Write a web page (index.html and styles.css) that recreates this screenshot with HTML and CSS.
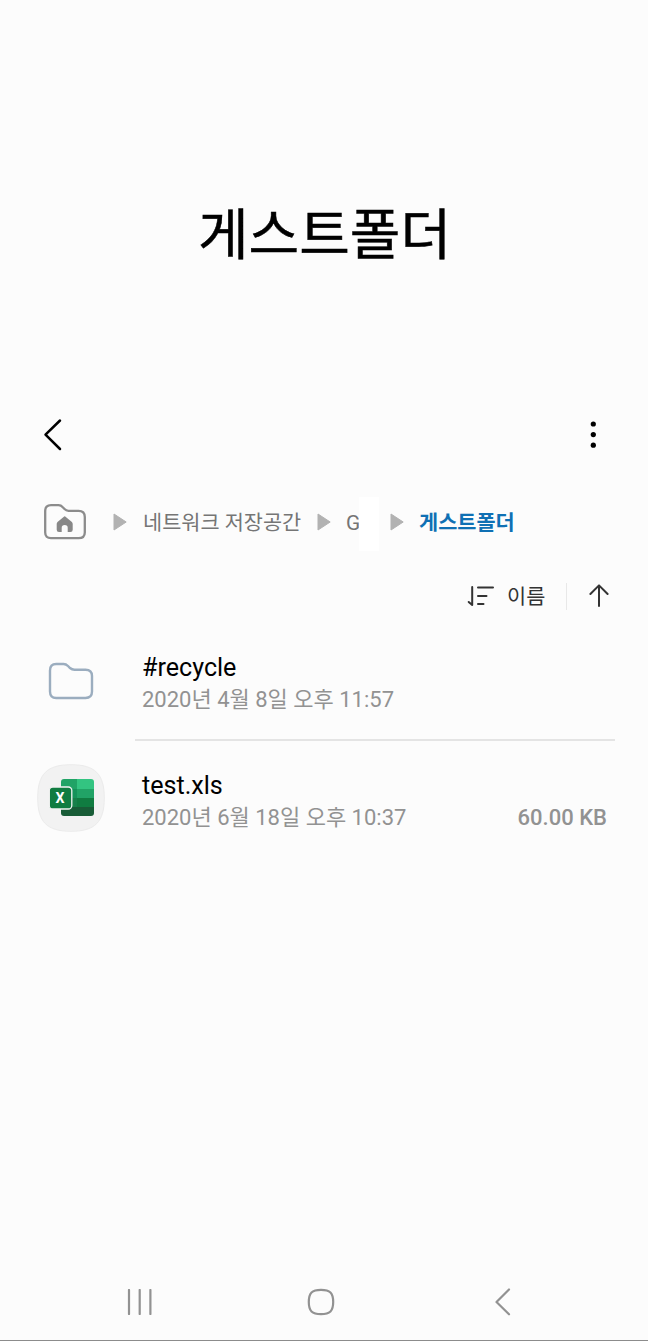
FILE: index.html
```html
<!DOCTYPE html>
<html lang="ko">
<head>
<meta charset="utf-8">
<title>게스트폴더</title>
<link rel="stylesheet" href="styles.css">
</head>
<body>
<div class="screen">
  <header class="hero"><h1 class="title">게스트폴더</h1></header>

  <div class="toolbar">
    <svg class="back" width="24" height="36" viewBox="0 0 24 36"><path d="M20 3.5 5.5 17.7 20 32" fill="none" stroke="#000" stroke-width="2.5" stroke-linecap="round" stroke-linejoin="round"/></svg>
    <svg class="more" width="8" height="30" viewBox="0 0 8 30"><g fill="#000"><circle cx="4.3" cy="4" r="2.6"/><circle cx="4.3" cy="14.6" r="2.6"/><circle cx="4.3" cy="25.2" r="2.6"/></g></svg>
  </div>

  <nav class="crumbs">
    <svg class="home" width="44" height="38" viewBox="0 0 44 38"><path d="M8 2.2H15.5Q18 2.2 19.8 4.2L21.5 6Q23.2 7.8 25.5 7.8H35.5Q41.8 7.8 41.8 14V29.5Q41.8 35.2 35.5 35.2H8Q2.2 35.2 2.2 29.5V8Q2.2 2.2 8 2.2Z" fill="none" stroke="#8c8c8c" stroke-width="2.3"/><path d="M21.2 13.4Q21.7 13 22.2 13.4L28.9 19Q29.7 19.8 29.7 21V26.7Q29.7 29 27.4 29H24.7V24.8Q24.7 22 21.7 22T18.7 24.8V29H16Q13.7 29 13.7 26.7V21Q13.7 19.8 14.5 19Z" fill="#888"/></svg>
    <svg class="arrow a1" width="14" height="18" viewBox="0 0 14 18"><path d="M1 1 13.2 9 1 17Z" fill="#b2b2b2" stroke="#b2b2b2" stroke-linejoin="round"/></svg>
    <span class="crumb c1">네트워크 저장공간</span>
    <svg class="arrow a2" width="14" height="18" viewBox="0 0 14 18"><path d="M1 1 13.2 9 1 17Z" fill="#b2b2b2" stroke="#b2b2b2" stroke-linejoin="round"/></svg>
    <span class="crumb c2">G</span>
    <span class="mask"></span>
    <svg class="arrow a3" width="14" height="18" viewBox="0 0 14 18"><path d="M1 1 13.2 9 1 17Z" fill="#b2b2b2" stroke="#b2b2b2" stroke-linejoin="round"/></svg>
    <span class="crumb current">게스트폴더</span>
  </nav>

  <div class="sort">
    <svg class="sort-icon" width="28" height="24" viewBox="0 0 28 24" fill="none" stroke="#333" stroke-width="2" stroke-linecap="round" stroke-linejoin="round"><path d="M5.2 3V21L1.7 18M11 3.5H26M11 12H19.5M11 20H16.5"/></svg>
    <span class="sort-label">이름</span>
    <span class="sort-rule"></span>
    <svg class="up" width="20" height="24" viewBox="0 0 20 24" fill="none" stroke="#333" stroke-width="2" stroke-linecap="round" stroke-linejoin="round"><path d="M10 22V1.6M1.4 10 10 1.4 18.6 10"/></svg>
  </div>

  <main class="files">
    <div class="row">
      <div class="thumb"><svg width="46" height="38" viewBox="0 0 46 38"><path d="M8.2 2H15.5Q18 2 20 4L22 6Q24 7.7 26.5 7.7H37.5Q44 7.7 44 14V29.6Q44 36 37.5 36H8.2Q2 36 2 29.6V8.5Q2 2 8.2 2Z" fill="none" stroke="#9badbf" stroke-width="2.4"/></svg></div>
      <div class="info ruled">
        <div class="name">#recycle</div>
        <div class="meta"><span class="date">2020년 4월 8일 오후 11:57</span></div>
      </div>
    </div>
    <div class="row">
      <div class="thumb app"><svg width="68" height="68" viewBox="0 0 68 68">
        <path d="M34 .7C58 .7 67.3 10 67.3 34S58 67.3 34 67.3.7 58 .7 34 10 .7 34 .7Z" fill="#f2f2f2" stroke="#ebebeb"/>
        <clipPath id="book"><rect x="24" y="15" width="33" height="37" rx="3"/></clipPath>
        <g clip-path="url(#book)"><path fill="#21a366" d="M24 15h16v10H24z"/><path fill="#33c481" d="M40 15h17v10H40z"/><path fill="#15935a" d="M24 25h16v9H24z"/><path fill="#21a366" d="M40 25h17v9H40z"/><path fill="#17804a" d="M24 34h16v9H24z"/><path fill="#107c41" d="M40 34h17v9H40z"/><path fill="#185c37" d="M24 43h33v9H24z"/></g>
        <rect x="12.3" y="23" width="22.5" height="22" rx="3.5" fill="#107c41" stroke="#f2f2f2" stroke-width="1.3"/>
        <text x="18.4" y="39.2" textLength="9" lengthAdjust="spacingAndGlyphs" class="badge-letter">X</text>
      </svg></div>
      <div class="info">
        <div class="name">test.xls</div>
        <div class="meta"><span class="date">2020년 6월 18일 오후 10:37</span><span class="size">60.00 KB</span></div>
      </div>
    </div>
  </main>

  <footer class="navbar">
    <svg class="recents" width="26" height="26" viewBox="0 0 26 26"><path d="M2 1V25M12.7 1V25M23.4 1V25" stroke="#929292" stroke-width="2.2" stroke-linecap="round"/></svg>
    <svg class="homekey" width="28" height="28" viewBox="0 0 28 28"><path d="M14 1.8C23 1.8 26.2 5 26.2 14S23 26.2 14 26.2 1.8 23 1.8 14 5 1.8 14 1.8Z" fill="none" stroke="#929292" stroke-width="2.2"/></svg>
    <svg class="backkey" width="18" height="28" viewBox="0 0 18 28"><path d="M15 1.5 2.5 14 15 26.3" fill="none" stroke="#929292" stroke-width="2.2" stroke-linecap="round" stroke-linejoin="round"/></svg>
  </footer>
</div>
</body>
</html>
```
FILE: styles.css
```css
* { box-sizing: border-box; }
body { margin: 0; background: #fcfcfc; font-family: Roboto, "Noto Sans CJK KR", sans-serif; color: #000; }
svg { display: block; flex: none; }
.screen { height: 1341px; display: flex; flex-direction: column; white-space: nowrap; overflow: hidden; }
.hero { height: 390px; padding: 195px 0 0 1px; text-align: center; }
.title { margin: 0; font-size: 55px; line-height: 80px; font-weight: 400; -webkit-text-stroke: 0.5px #000; }
.toolbar { height: 90px; display: flex; align-items: center; justify-content: space-between; padding: 0 51px 0 40px; }
.crumbs { height: 84px; display: flex; align-items: center; padding-left: 43px; color: #757575; font-size: 20.8px; line-height: 30px; }
.crumb { padding-top: 2px; }
.a1 { margin-left: 26px; }
.c1 { margin-left: 16px; width: 158px; }
.a2 { margin-left: 16px; }
.c2 { margin-left: 15px; width: 13px; }
.mask { width: 20px; height: 54px; background: #fff; margin-top: 4px; }
.a3 { margin-left: 11px; }
.current { margin-left: 15px; color: #0f70b4; font-weight: 700; }
.sort { height: 64px; display: flex; align-items: center; padding-left: 467px; color: #333; font-size: 20.8px; line-height: 30px; }
.sort-label { margin-left: 12px; width: 39px; padding-top: 2px; }
.sort-rule { margin-left: 20px; width: 1px; height: 27px; background: #e8e8e8; }
.up { margin-left: 22px; }
.files { flex: 1; padding-top: 1px; margin-top: -6px; }
.row { height: 118px; display: flex; padding: 0 33px 0 36px; }
.thumb { width: 70px; height: 115px; display: flex; align-items: center; justify-content: center; }
.app { height: 114px; padding-right: 1px; }
.info { margin-left: 29px; flex: 1; padding: 29px 8px 0 7px; }
.ruled { border-bottom: 2px solid #e4e4e4; }
.name { font-size: 25.1px; line-height: 32px; }
.meta { display: flex; justify-content: space-between; font-size: 22px; line-height: 32px; color: #929292; }
.size { font-weight: 500; }
.badge-letter { font: 700 15px Roboto, sans-serif; fill: #fff; }
.navbar { height: 79px; display: flex; align-items: center; padding: 1px 0 0 127px; border-bottom: 1px solid #8c8c8c; }
.homekey { margin-left: 154px; }
.backkey { margin-left: 159px; }
```
